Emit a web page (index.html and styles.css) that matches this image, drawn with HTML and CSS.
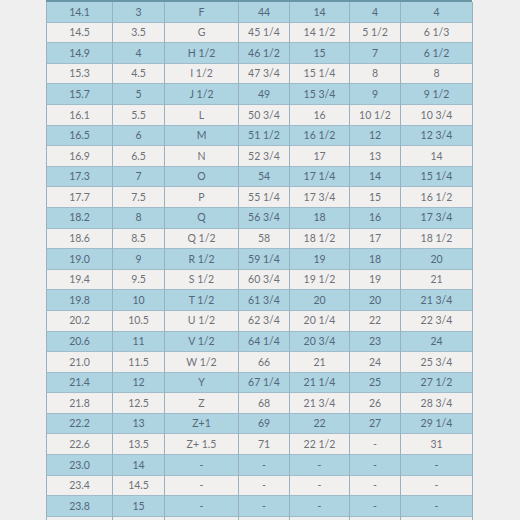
FILE: index.html
```html
<!DOCTYPE html>
<html>
<head>
<meta charset="utf-8">
<link rel="stylesheet" href="styles.css">
</head>
<body>
<div class="page">
  <div class="sheet">
    <div class="head-edge"></div>
    <table class="sizes">
      <colgroup>
        <col class="c1"><col class="c2"><col class="c3"><col class="c4"><col class="c5"><col class="c6"><col class="c7">
      </colgroup>
      <tbody>
        <tr><td>14.1</td><td>3</td><td>F</td><td>44</td><td>14</td><td>4</td><td>4</td></tr>
        <tr><td>14.5</td><td>3.5</td><td>G</td><td>45 1/4</td><td>14 1/2</td><td>5 1/2</td><td>6 1/3</td></tr>
        <tr><td>14.9</td><td>4</td><td>H 1/2</td><td>46 1/2</td><td>15</td><td>7</td><td>6 1/2</td></tr>
        <tr><td>15.3</td><td>4.5</td><td>I 1/2</td><td>47 3/4</td><td>15 1/4</td><td>8</td><td>8</td></tr>
        <tr><td>15.7</td><td>5</td><td>J 1/2</td><td>49</td><td>15 3/4</td><td>9</td><td>9 1/2</td></tr>
        <tr><td>16.1</td><td>5.5</td><td>L</td><td>50 3/4</td><td>16</td><td>10 1/2</td><td>10 3/4</td></tr>
        <tr><td>16.5</td><td>6</td><td>M</td><td>51 1/2</td><td>16 1/2</td><td>12</td><td>12 3/4</td></tr>
        <tr><td>16.9</td><td>6.5</td><td>N</td><td>52 3/4</td><td>17</td><td>13</td><td>14</td></tr>
        <tr><td>17.3</td><td>7</td><td>O</td><td>54</td><td>17 1/4</td><td>14</td><td>15 1/4</td></tr>
        <tr><td>17.7</td><td>7.5</td><td>P</td><td>55 1/4</td><td>17 3/4</td><td>15</td><td>16 1/2</td></tr>
        <tr><td>18.2</td><td>8</td><td>Q</td><td>56 3/4</td><td>18</td><td>16</td><td>17 3/4</td></tr>
        <tr><td>18.6</td><td>8.5</td><td>Q 1/2</td><td>58</td><td>18 1/2</td><td>17</td><td>18 1/2</td></tr>
        <tr><td>19.0</td><td>9</td><td>R 1/2</td><td>59 1/4</td><td>19</td><td>18</td><td>20</td></tr>
        <tr><td>19.4</td><td>9.5</td><td>S 1/2</td><td>60 3/4</td><td>19 1/2</td><td>19</td><td>21</td></tr>
        <tr><td>19.8</td><td>10</td><td>T 1/2</td><td>61 3/4</td><td>20</td><td>20</td><td>21 3/4</td></tr>
        <tr><td>20.2</td><td>10.5</td><td>U 1/2</td><td>62 3/4</td><td>20 1/4</td><td>22</td><td>22 3/4</td></tr>
        <tr><td>20.6</td><td>11</td><td>V 1/2</td><td>64 1/4</td><td>20 3/4</td><td>23</td><td>24</td></tr>
        <tr><td>21.0</td><td>11.5</td><td>W 1/2</td><td>66</td><td>21</td><td>24</td><td>25 3/4</td></tr>
        <tr><td>21.4</td><td>12</td><td>Y</td><td>67 1/4</td><td>21 1/4</td><td>25</td><td>27 1/2</td></tr>
        <tr><td>21.8</td><td>12.5</td><td>Z</td><td>68</td><td>21 3/4</td><td>26</td><td>28 3/4</td></tr>
        <tr><td>22.2</td><td>13</td><td>Z+1</td><td>69</td><td>22</td><td>27</td><td>29 1/4</td></tr>
        <tr><td>22.6</td><td>13.5</td><td>Z+ 1.5</td><td>71</td><td>22 1/2</td><td class="na">-</td><td>31</td></tr>
        <tr><td>23.0</td><td>14</td><td class="na">-</td><td class="na">-</td><td class="na">-</td><td class="na">-</td><td class="na">-</td></tr>
        <tr><td>23.4</td><td>14.5</td><td class="na">-</td><td class="na">-</td><td class="na">-</td><td class="na">-</td><td class="na">-</td></tr>
        <tr><td>23.8</td><td>15</td><td class="na">-</td><td class="na">-</td><td class="na">-</td><td class="na">-</td><td class="na">-</td></tr>
        <tr><td></td><td></td><td></td><td></td><td></td><td></td><td></td></tr>
      </tbody>
    </table>
  </div>
</div>
</body>
</html>
```

FILE: styles.css
```css
html, body {
  margin: 0;
  padding: 0;
  background: #efefef;
  height: 520px;
  overflow: hidden;
}

.page {
  padding-left: 46px;
}

.sheet {
  width: 426px;
}

.head-edge {
  height: 2px;
  background: #6a97a8;
}

.sizes {
  width: 426px;
  border-collapse: collapse;
  table-layout: fixed;
  font-family: "Lato", "Open Sans", sans-serif;
  font-size: 10.5px;
  color: #56697a;
}

.c1 { width: 66px; }
.c2 { width: 52px; }
.c3 { width: 74px; }
.c4 { width: 51px; }
.c5 { width: 60px; }
.c6 { width: 51px; }
.c7 { width: 72px; }

.sizes td {
  height: 19.6px;
  padding: 0;
  text-align: center;
  border-top: 1px solid #9fbccb;
  border-left: 1px solid #9ab2c0;
  border-right: 1px solid #9ab2c0;
  line-height: 1;
}

.sizes tr:first-child td {
  border-top: none;
}

.sizes tr:nth-child(odd) td {
  background: #aed3e1;
  color: #52687a;
}

.sizes tr:nth-child(even) td {
  background: #f2f0ef;
  color: #6d7177;
}

.sizes td.na {
  color: #9eadb6;
}
```
